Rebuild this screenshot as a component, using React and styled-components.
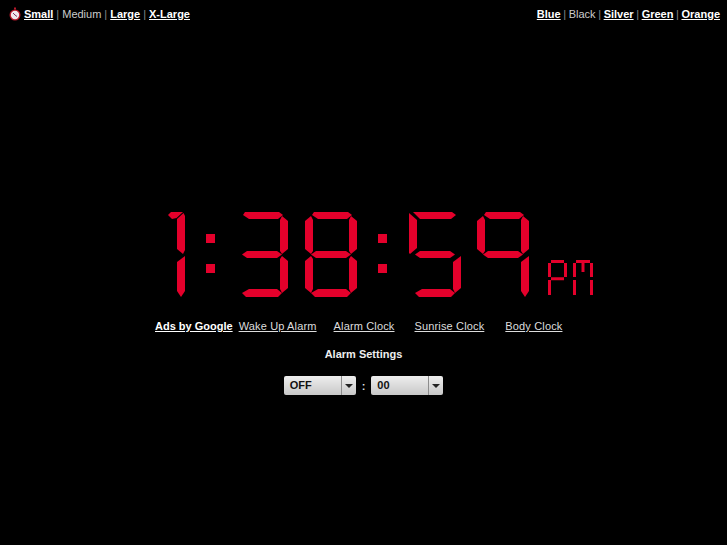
import React from 'react';
import styled, { createGlobalStyle } from 'styled-components';

const GlobalStyle = createGlobalStyle`
  html, body {
    margin: 0;
    background: #000;
  }
  body {
    font-family: "Liberation Sans", Arial, sans-serif;
    font-size: 11px;
    color: #fff;
  }
`;

const Page = styled.div`
  width: 727px;
  height: 545px;
  display: flex;
  flex-direction: column;
  align-items: center;
  overflow: hidden;
`;

const TopBar = styled.div`
  width: 100%;
  box-sizing: border-box;
  height: 28px;
  padding: 7px 7px 0 9px;
  display: flex;
  justify-content: space-between;
  line-height: 14px;
`;

const Group = styled.div`
  display: flex;
  align-items: center;
  height: 14px;
`;

const OptionLink = styled.a`
  color: #fff;
  font-weight: bold;
  text-decoration: underline;
`;

const Current = styled.span`
  color: #ccc;
`;

const Sep = styled.span`
  color: #888;
  margin: 0 ${props => props.$space || 3}px;
`;

const ClockIcon = styled.svg`
  width: 12px;
  height: 14px;
  margin-right: 3px;
`;

const Display = styled.div`
  margin-top: 184px;
  height: 85px;
  display: flex;
  align-items: flex-start;
  align-self: flex-start;
  padding-left: 168px;
`;

const Digit = styled.svg`
  display: block;
  flex: none;
  fill: #e4002b;
  width: ${props => props.$w}px;
  height: 85px;
  margin-left: ${props => props.$gap}px;
`;

const Colon = styled.div`
  width: 9px;
  height: 85px;
  margin-left: ${props => props.$gap}px;
  display: flex;
  flex-direction: column;
  gap: 21px;
  padding-top: 22px;
  box-sizing: border-box;
`;

const Dot = styled.i`
  display: block;
  width: 9px;
  height: 9px;
  background: #e4002b;
`;

const Meridiem = styled.svg`
  display: block;
  flex: none;
  width: 46px;
  height: 36px;
  margin: 48px 0 0 19px;
  fill: none;
  stroke: #e4002b;
  stroke-width: 3px;
`;

const AdRow = styled.div`
  margin-top: 22px;
  height: 14px;
  line-height: 14px;
  display: flex;
  align-items: center;
  align-self: flex-start;
  padding-left: 155px;
`;

const AdLabel = styled.a`
  color: #fff;
  font-weight: bold;
  text-decoration: underline;
  margin-right: 6px;
`;

const AdLink = styled.a`
  color: #ddd;
  text-decoration: underline;
  letter-spacing: 0.15px;
  margin-right: ${props => props.$gap}px;
`;

const SettingsTitle = styled.div`
  margin-top: 14px;
  font-weight: bold;
  line-height: 14px;
  color: #eee;
`;

const Settings = styled.div`
  margin-top: 15px;
  display: flex;
  align-items: center;
  gap: 6px;
  color: #ddd;
  font-weight: bold;
`;

const Select = styled.div`
  width: 72px;
  height: 19px;
  box-sizing: border-box;
  display: flex;
  border-radius: 2px;
  overflow: hidden;
  color: #111;
  font-weight: bold;
  line-height: 19px;
  background: linear-gradient(#eee, #c8c8c8);
`;

const SelectValue = styled.span`
  flex: 1;
  padding-left: 6px;
`;

const SelectArrow = styled.span`
  width: 14px;
  border-left: 1px solid #8c8c8c;
  display: flex;
  align-items: center;
  justify-content: center;
  &::after {
    content: '';
    border-left: 4px solid transparent;
    border-right: 4px solid transparent;
    border-top: 4px solid #222;
  }
`;

// lit segments, a top, b upper right, c lower right, d bottom, e lower left, f upper left, g middle
const SEGMENTS = {
  a: '9,0 43,0 47,3 42,7 13,7 7,3',
  b: '46,4 52,9 52,37 46,42 44,39 44,8',
  c: '46,44 52,49 52,76 46,81 44,77 44,47',
  d: '13,77 41,77 46,81 42,85 10,85 6,81',
  e: '6,44 8,47 8,77 6,81 0,76 0,49',
  f: '6,4 8,8 8,39 6,42 0,37 0,9',
  g: '11,39 41,39 46,42.5 41,46 11,46 6,42.5',
};

const OVERRIDES = {
  5: {
    a: '4,0 43,0 47,3 42,7 11,7',
    f: '0,1 8,8 8,36 1,42 0,41',
    c: '52,44 52,76 46,81 44,77 44,50',
  },
  9: {
    c: '52,44 52,79 48,85 44,79 44,50',
  },
};

const DIGITS = {
  3: 'abcdg',
  8: 'abcdefg',
  5: 'acdfg',
  9: 'abcfg',
};

const SevenSeg = ({ value, gap }) => (
  <Digit $w={52} $gap={gap} viewBox="0 0 52 85" aria-hidden="true">
    {DIGITS[value].split('').map(s => (
      <polygon key={s} points={(OVERRIDES[value] || {})[s] || SEGMENTS[s]} />
    ))}
  </Digit>
);

const One = () => (
  <Digit $w={17} $gap={0} viewBox="0 0 17 85" aria-hidden="true">
    <polygon points="0,3 3,0 15,0 8.5,6 4,7" />
    <polygon points="15.5,1 17,4 17,38 15,42 9,37 9,7" />
    <polygon points="17,44 17,79 13,85 9,79 9,50" />
  </Digit>
);

const App = () => (
  <Page>
    <GlobalStyle />
    <TopBar>
      <Group>
        <ClockIcon viewBox="0 0 12 14">
          <circle cx="6" cy="8" r="5.5" fill="#b8182a" />
          <circle cx="6" cy="8" r="4.2" fill="#f0e8ec" />
          <path d="M6 8 L4 6 M6 8 L8 9.5" stroke="#803060" strokeWidth="1" />
          <rect x="5" y="0.5" width="2" height="2" fill="#b8182a" />
        </ClockIcon>
        <OptionLink>Small</OptionLink>
        <Sep>|</Sep>
        <Current>Medium</Current>
        <Sep>|</Sep>
        <OptionLink>Large</OptionLink>
        <Sep>|</Sep>
        <OptionLink>X-Large</OptionLink>
      </Group>
      <Group>
        <OptionLink>Blue</OptionLink>
        <Sep $space={2.6}>|</Sep>
        <Current>Black</Current>
        <Sep $space={2.6}>|</Sep>
        <OptionLink>Silver</OptionLink>
        <Sep $space={2.6}>|</Sep>
        <OptionLink>Green</OptionLink>
        <Sep $space={2.6}>|</Sep>
        <OptionLink>Orange</OptionLink>
      </Group>
    </TopBar>
    <Display role="img" aria-label="1:38:59 pm">
      <One />
      <Colon $gap={21}><Dot /><Dot /></Colon>
      <SevenSeg value={3} gap={21} />
      <SevenSeg value={8} gap={17} />
      <Colon $gap={21}><Dot /><Dot /></Colon>
      <SevenSeg value={5} gap={22} />
      <SevenSeg value={9} gap={16} />
      <Meridiem viewBox="0 0 46 36">
        <path d="M1.5 3 V17 M1.5 20 V35 M3 1.5 H16 M17.5 3 V17 M3 18.7 H16" />
        <path d="M26.5 3 V17 M26.5 20 V35 M43.5 3 V17 M43.5 20 V35 M28 1.5 H42 M35 3 V12" />
      </Meridiem>
    </Display>
    <AdRow>
      <AdLabel>Ads by Google</AdLabel>
      <AdLink $gap={17}>Wake Up Alarm</AdLink>
      <AdLink $gap={20}>Alarm Clock</AdLink>
      <AdLink $gap={21}>Sunrise Clock</AdLink>
      <AdLink $gap={0}>Body Clock</AdLink>
    </AdRow>
    <SettingsTitle>Alarm Settings</SettingsTitle>
    <Settings>
      <Select>
        <SelectValue>OFF</SelectValue>
        <SelectArrow />
      </Select>
      <span>:</span>
      <Select>
        <SelectValue>00</SelectValue>
        <SelectArrow />
      </Select>
    </Settings>
  </Page>
);

export default App;
